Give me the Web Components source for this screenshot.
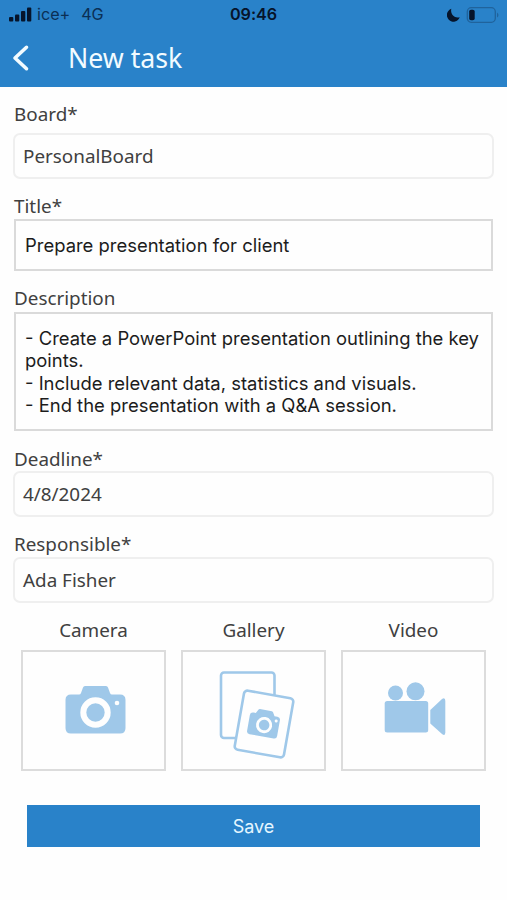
<!DOCTYPE html>
<html lang="en">
<head>
<meta charset="utf-8">
<title>New task</title>
<style>
html, body { margin: 0; background: #fefefe; }
body { width: 507px; height: 900px; overflow: hidden; font-family: "Noto Sans", sans-serif; color: #404040; }
</style>
</head>
<body>
<task-screen></task-screen>
<script>
const define = (name, html) => customElements.define(name, class extends HTMLElement {
  constructor() {
    super();
    const t = document.createElement('template');
    t.innerHTML = html;
    this.attachShadow({ mode: 'open' }).append(t.content.cloneNode(true));
  }
});

define('status-bar', `
<style>
:host { display: grid; grid-template-columns: 1fr auto 1fr; align-items: center; height: 29px; padding: 0 8px; font: 16.200px/29px Inter, sans-serif; color: #0b2f55; }
svg { display: block; }
.left, .right { display: flex; align-items: center; }
.left { gap: 5px; }
.right { justify-content: flex-end; gap: 6px; }
.net { margin-left: 6px; letter-spacing: -.3px; }
.time { font-weight: 600; color: #06142b; letter-spacing: -.05px; }
</style>
<div class="left">
  <svg width="24" height="15" viewBox="0 0 24 15" fill="#06142b"><rect x="1" y="10" width="4.300" height="4.500" rx="1"/><rect x="7" y="7.500" width="4.300" height="7" rx="1"/><rect x="13" y="4" width="4.300" height="10.500" rx="1"/><rect x="19" y=".5" width="4.300" height="14" rx="1"/></svg>
  <span>ice+</span><span class="net">4G</span>
</div>
<span class="time">09:46</span>
<div class="right">
  <svg width="13" height="14" viewBox="0 0 13 14"><path d="M4.300 .8A6.600 6.600 0 1 0 12.700 9.200C8 11 3 6.500 4.300 .8Z" fill="#06142b"/></svg>
  <svg width="33" height="16" viewBox="0 0 33 16"><rect x="1.300" y=".7" width="28" height="14.600" rx="4" fill="none" stroke="#20639c" stroke-width="1.300"/><rect x="3.200" y="2.700" width="5.500" height="10.600" rx="1.800" fill="#06142b"/><path d="M31 5.500q1.500 1 1.500 2.500T31 10.500Z" fill="#20639c"/></svg>
</div>`);

define('nav-bar', `
<style>
:host { display: flex; align-items: center; height: 58px; padding-left: 12px; color: #f2fbff; }
svg { display: block; width: 18px; height: 28px; }
h1 { margin: 0 0 0 38px; font-size: 26.700px; font-weight: 400; line-height: 58px; }
</style>
<svg viewBox="0 0 18 28" fill="none" stroke="currentColor" stroke-width="3.600" stroke-linecap="round" stroke-linejoin="round"><path d="M14.500 3.300L3 14L14.500 24.700"/></svg>
<h1><slot></slot></h1>`);

define('form-field', `
<style>
:host { display: flex; flex-direction: column; margin-bottom: var(--after, 15px); }
.label { font-size: 18.850px; line-height: 24px; padding-left: 1px; margin-bottom: var(--label-gap, 1px); }
.box { box-sizing: border-box; height: var(--h, 46px); border: 2px solid #efefef; border-radius: 7px; padding: 0 0 0 8px; font-size: 18.850px; line-height: 43px; }
:host([editable]) .box { margin: 0 1px; padding-left: 9px; border-color: #dadada; border-radius: 0; color: #1c1c1c; font-size: 18.440px; font-family: Inter, sans-serif; line-height: 49px; }
:host([multiline]) .box { padding-top: 13px; line-height: 22.400px; white-space: pre-line; }
</style>
<div class="label"><slot name="label"></slot></div>
<div class="box"><slot></slot></div>`);

define('media-tile', `
<style>
:host { display: flex; flex-direction: column; align-items: center; width: 145px; }
.label { font-size: 18.850px; line-height: 24px; margin-bottom: 8px; }
.box { box-sizing: border-box; width: 145px; height: 121px; border: 2px solid #dcdcdc; }
</style>
<span class="label"><slot name="label"></slot></span>
<div class="box"><slot></slot></div>`);

const iconStyle = '<style>:host { display: block; } svg { display: block; }</style>';

define('camera-icon', iconStyle + `
<svg width="141" height="117" viewBox="23 652 141 117"><path d="M71 694.500H79Q80.500 694.500 81 693L83 687.500Q83.500 686 85 686H106Q107.500 686 108 687.500L110 693Q110.500 694.500 112 694.500H120Q125.500 694.500 125.500 700V728Q125.500 733.500 120 733.500H71Q65.500 733.500 65.500 728V700Q65.500 694.500 71 694.500Z" fill="#9fc8e9"/><circle cx="95.500" cy="712.500" r="12.200" fill="#9fc8e9" stroke="#fefefe" stroke-width="6"/><circle cx="117" cy="703" r="2.300" fill="#fefefe"/></svg>`);

define('gallery-icon', iconStyle + `
<svg width="141" height="117" viewBox="183 652 141 117"><rect x="221" y="672.500" width="53.500" height="65.500" rx="3" fill="#fefefe" stroke="#9fc8e9" stroke-width="2.600"/><g transform="translate(264 724) rotate(10)"><rect x="-25" y="-30" width="50" height="60" rx="3.500" fill="#fefefe" stroke="#9fc8e9" stroke-width="2.600"/><path d="M-12-9.500H-10L-8-13Q-7.500-14-6.500-14H5.500Q6.500-14 7-13L9-9.500H12Q15-9.500 15-6.500V9.500Q15 12.500 12 12.500H-12.500Q-15.500 12.500-15.500 9.500V-6.500Q-15.500-9.500-12-9.500Z" fill="#9fc8e9"/><circle cx=".3" cy="1" r="6.700" fill="#9fc8e9" stroke="#fefefe" stroke-width="2.800"/><circle cx="11.500" cy="-5" r="1.500" fill="#fefefe"/></g></svg>`);

define('video-icon', iconStyle + `
<svg width="141" height="117" viewBox="343 652 141 117" fill="#9fc8e9"><circle cx="395.500" cy="693" r="7.500"/><circle cx="415.500" cy="691.300" r="9"/><rect x="384.700" y="701" width="43.500" height="31.500" rx="2.500"/><path d="M430.300 710L442 699Q445.300 697 445.300 701V732.500Q445.300 736.500 442 734L430.300 723.500Z"/></svg>`);

define('save-button', `
<style>
:host { display: block; }
button { display: block; width: 100%; height: 42px; border: 0; padding: 1px 0 0; background: #2982c9; color: #e4f6ff; font: 18px/41px Inter, sans-serif; letter-spacing: -.1px; }
</style>
<button><slot></slot></button>`);

define('task-screen', `
<style>
:host { display: block; }
header { background: #2982c9; height: 87px; }
main { padding: 15px 13px 0; }
.media { display: flex; gap: 15px; padding-left: 8px; }
save-button { margin: 34px 14px 0; }
</style>
<header><status-bar></status-bar><nav-bar>New task</nav-bar></header>
<main>
  <form-field style="--label-gap:7px"><span slot="label">Board*</span>PersonalBoard</form-field>
  <form-field editable style="--h:52px"><span slot="label">Title*</span>Prepare presentation for client</form-field>
  <form-field editable multiline style="--h:119px;--after:16px;--label-gap:2px"><span slot="label">Description</span>- Create a PowerPoint presentation outlining the key points.
- Include relevant data, statistics and visuals.
- End the presentation with a Q&amp;A session.</form-field>
  <form-field style="--label-gap:0px"><span slot="label">Deadline*</span>4/8/2024</form-field>
  <form-field><span slot="label">Responsible*</span>Ada Fisher</form-field>
  <div class="media">
    <media-tile><span slot="label">Camera</span><camera-icon></camera-icon></media-tile>
    <media-tile><span slot="label">Gallery</span><gallery-icon></gallery-icon></media-tile>
    <media-tile><span slot="label">Video</span><video-icon></video-icon></media-tile>
  </div>
  <save-button>Save</save-button>
</main>`);
</script>
</body>
</html>
